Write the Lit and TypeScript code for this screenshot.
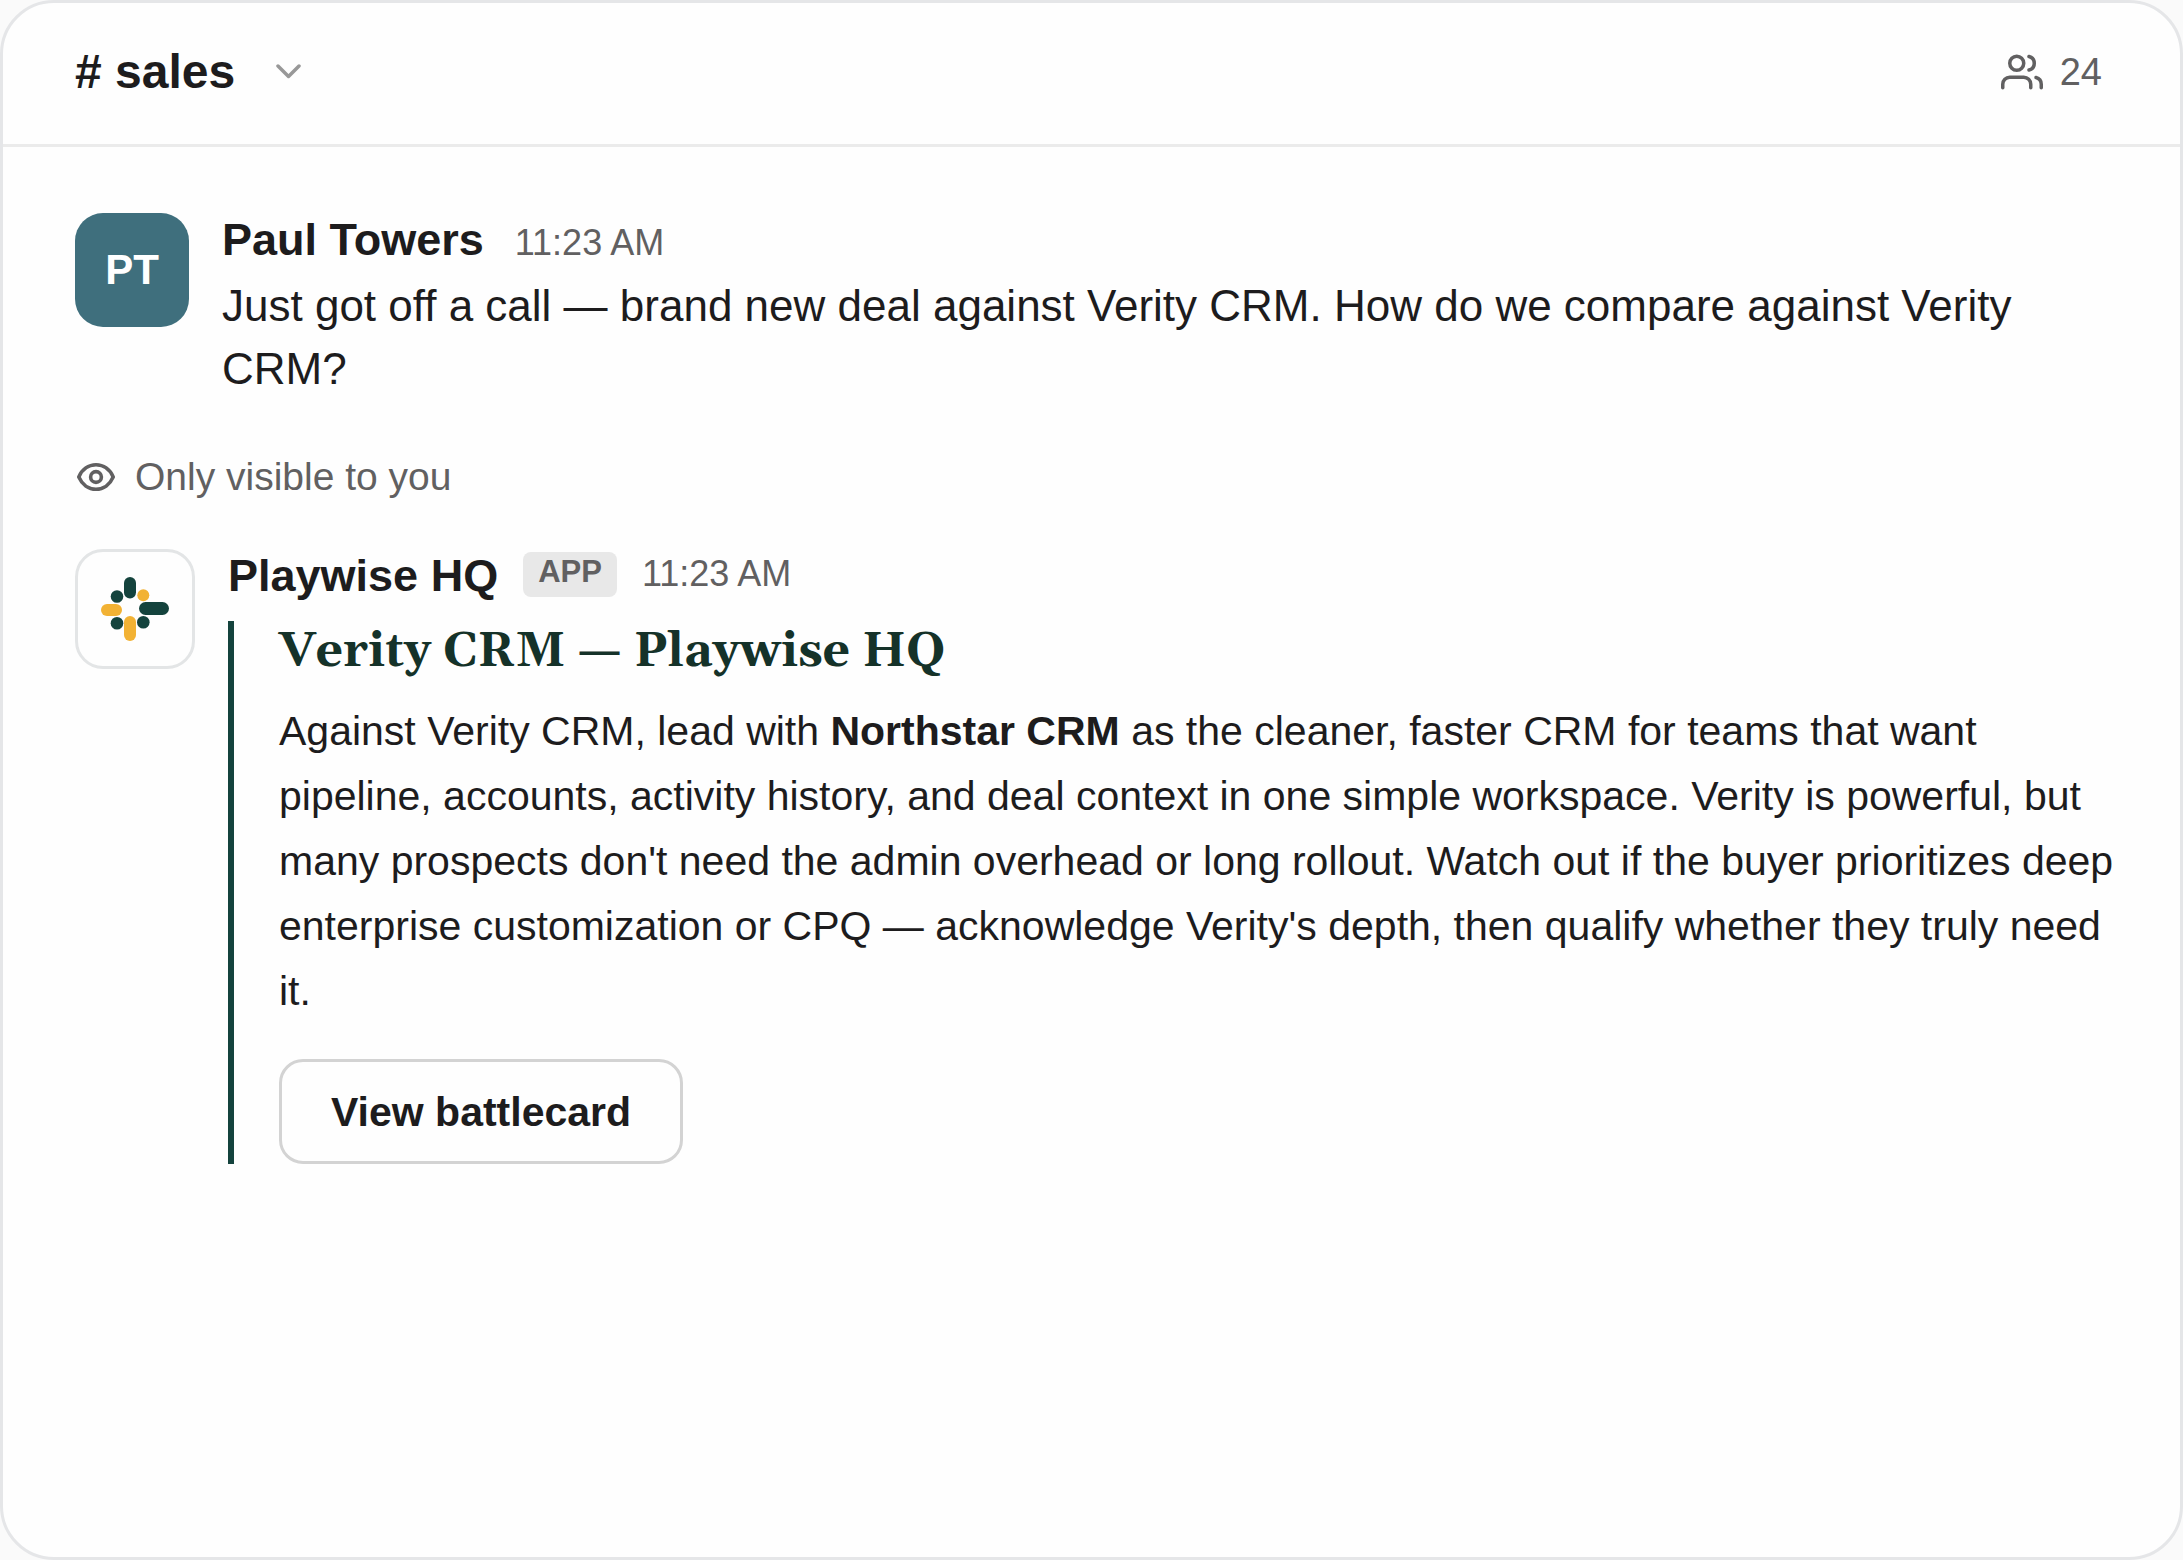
import { LitElement, html, css, svg } from "lit";
import { customElement, property } from "lit/decorators.js";

const usersIcon = html`<svg class="users" viewBox="0 0 24 24" aria-hidden="true">${svg`
  <path d="M17 21v-2a4 4 0 0 0-4-4H5a4 4 0 0 0-4 4v2" />
  <circle cx="9" cy="7" r="4" />
  <path d="M23 21v-2a4 4 0 0 0-3-3.87" />
  <path d="M16 3.13a4 4 0 0 1 0 7.75" />`}</svg>`;

const eyeIcon = html`<svg class="eye" viewBox="0 0 38 28" aria-hidden="true">${svg`
  <path d="M1.800 14C5 6.500 11.500 1.800 19 1.800S33 6.500 36.200 14C33 21.500 26.500 26.200 19 26.200S5 21.500 1.800 14Z" />
  <circle cx="19" cy="14" r="5.400" />`}</svg>`;

const playwiseLogo = html`<svg class="logo" viewBox="0 0 68 64" aria-hidden="true">${svg`
  <g fill="#14433d">
    <rect x="23" y="0" width="12" height="21.500" rx="6" />
    <rect x="38" y="25" width="30" height="13" rx="6.500" />
    <circle cx="16" cy="19.500" r="6.300" />
    <circle cx="16" cy="46.300" r="6.300" />
    <circle cx="42.300" cy="45.300" r="6.300" />
  </g>
  <g fill="#f2b234">
    <rect x="0" y="27" width="21" height="12" rx="6" />
    <rect x="23" y="39" width="12" height="25" rx="6" />
    <circle cx="42.300" cy="18.300" r="6" />
  </g>`}</svg>`;

@customElement("chat-message")
class ChatMessage extends LitElement {
  @property() author = "";
  @property() time = "";
  @property({ type: Boolean, reflect: true }) app = false;

  static styles = css`
    :host { display: flex; align-items: flex-start; gap: 33px; }
    .avatar {
      box-sizing: border-box; flex: none; display: grid; place-items: center;
      width: 114px; height: 114px; border-radius: 28px;
      background: #3f6f7d; color: #fff; font-size: 42px; font-weight: 700; line-height: 48px;
    }
    :host([app]) .avatar {
      width: 120px; height: 120px; background: #fefefe; border: 3px solid #e3e5e6;
    }
    .content { flex: 1; min-width: 0; }
    .meta { display: flex; align-items: baseline; gap: 31px; height: 61px; line-height: 54px; }
    :host([app]) .meta { align-items: flex-start; gap: 25px; height: 72px; }
    .author { font-size: 45px; font-weight: 700; }
    .badge {
      margin-top: 3px; padding: 0 15px; height: 45px; border-radius: 8px;
      background: #e8e8e8; color: #616061; font-size: 31px; font-weight: 700; line-height: 40px;
    }
    .time { font-size: 36px; color: #616061; }
    :host([app]) .time { line-height: 49px; }
  `;

  render() {
    return html`
      <div class="avatar"><slot name="avatar"></slot></div>
      <div class="content">
        <div class="meta">
          <span class="author">${this.author}</span>
          ${this.app ? html`<span class="badge">APP</span>` : ""}
          <time class="time">${this.time}</time>
        </div>
        <slot></slot>
      </div>`;
  }
}

@customElement("app-root")
class AppRoot extends LitElement {
  static styles = css`
    :host {
      display: block; min-height: 100vh; background: #fafafa; color: #1d1c1d;
      font-family: "Liberation Sans", Arial, sans-serif;
    }
    * { box-sizing: border-box; }
    h1, h2, p { margin: 0; }
    .card {
      min-height: 100vh; border: 3px solid #e5e6e8; border-radius: 54px; background: #fefefe;
    }
    header {
      display: flex; align-items: center; justify-content: space-between;
      height: 144px; padding: 0 78px 4px 72px; border-bottom: 3px solid #ebebeb;
    }
    h1 { font-size: 48px; line-height: 56px; }
    svg { display: block; fill: none; stroke: currentColor; stroke-linecap: round; stroke-linejoin: round; }
    .channel {
      display: flex; align-items: center; gap: 41px; padding: 0; border: 0;
      background: none; color: inherit; font: inherit; cursor: pointer;
    }
    .chevron { width: 25px; height: 15px; stroke-width: 3.5; color: #989898; }
    .members { display: flex; align-items: center; gap: 17px; color: #616061; font-size: 38px; line-height: 44px; }
    .users { width: 42px; height: 42px; stroke-width: 2; }
    main { display: flex; flex-direction: column; padding: 66px 56px 66px 72px; }
    .text { font-size: 44px; line-height: 63px; }
    .notice {
      display: flex; align-items: center; gap: 20px; margin: 53px 0 48px; padding-left: 2px;
      color: #616061; font-size: 39px; line-height: 48px;
    }
    .eye { width: 38px; height: 28px; stroke-width: 3.6; }
    .logo { width: 68px; height: 64px; stroke: none; }
    .attachment { padding-left: 45px; border-left: 6px solid #14433d; }
    h2 { color: #153229; font-family: Georgia, Gelasio, "DejaVu Serif", serif; font-size: 48px; line-height: 62px; }
    .summary { margin-top: 16px; font-size: 41px; line-height: 65px; }
    .action {
      display: block; height: 105px; margin-top: 35px; padding: 0 49px;
      border: 3px solid #d3d3d3; border-radius: 24px; background: #fefefe; color: inherit;
      font: 700 41px/48px "Liberation Sans", Arial, sans-serif; cursor: pointer;
    }
  `;

  render() {
    return html`
      <section class="card">
        <header>
          <button class="channel" aria-haspopup="menu">
            <h1># sales</h1>
            <svg class="chevron" viewBox="0 0 25 15" aria-hidden="true"><path d="M2 2 12.500 12.500 23 2" /></svg>
          </button>
          <div class="members">${usersIcon}<span>24</span></div>
        </header>
        <main>
          <chat-message author="Paul Towers" time="11:23 AM">
            <span slot="avatar">PT</span>
            <p class="text">Just got off a call — brand new deal against Verity CRM. How do we compare against Verity CRM?</p>
          </chat-message>
          <div class="notice">${eyeIcon}<span>Only visible to you</span></div>
          <chat-message app author="Playwise HQ" time="11:23 AM">
            <span slot="avatar">${playwiseLogo}</span>
            <div class="attachment">
              <h2>Verity CRM — Playwise HQ</h2>
              <p class="summary">
                Against Verity CRM, lead with <strong>Northstar CRM</strong> as the cleaner, faster CRM for teams
                that want pipeline, accounts, activity history, and deal context in one simple workspace. Verity is
                powerful, but many prospects don't need the admin overhead or long rollout. Watch out if the buyer
                prioritizes deep enterprise customization or CPQ — acknowledge Verity's depth, then qualify whether
                they truly need it.
              </p>
              <button class="action">View battlecard</button>
            </div>
          </chat-message>
        </main>
      </section>`;
  }
}
